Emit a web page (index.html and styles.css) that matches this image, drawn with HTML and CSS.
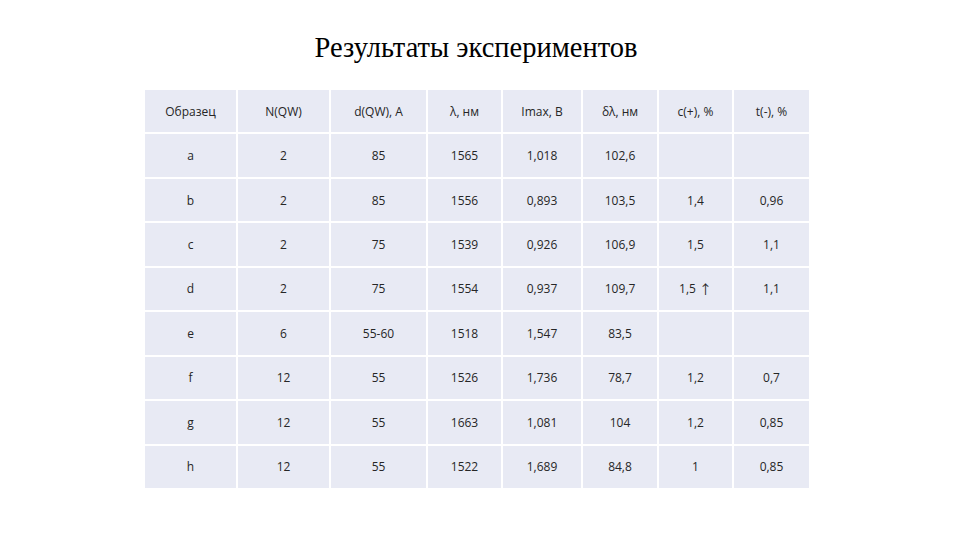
FILE: index.html
```html
<!DOCTYPE html>
<html lang="ru">
<head>
<meta charset="utf-8">
<link rel="stylesheet" href="styles.css">
</head>
<body>
<div class="slide">
  <h1 class="title">Результаты экспериментов</h1>
  <div class="table">
    <div class="cell">Образец</div><div class="cell">N(QW)</div><div class="cell">d(QW), A</div><div class="cell">λ, нм</div><div class="cell">Imax, B</div><div class="cell">δλ, нм</div><div class="cell">c(+), %</div><div class="cell">t(-), %</div>
    <div class="cell">a</div><div class="cell">2</div><div class="cell">85</div><div class="cell">1565</div><div class="cell">1,018</div><div class="cell">102,6</div><div class="cell"></div><div class="cell"></div>
    <div class="cell">b</div><div class="cell">2</div><div class="cell">85</div><div class="cell">1556</div><div class="cell">0,893</div><div class="cell">103,5</div><div class="cell">1,4</div><div class="cell">0,96</div>
    <div class="cell">c</div><div class="cell">2</div><div class="cell">75</div><div class="cell">1539</div><div class="cell">0,926</div><div class="cell">106,9</div><div class="cell">1,5</div><div class="cell">1,1</div>
    <div class="cell">d</div><div class="cell">2</div><div class="cell">75</div><div class="cell">1554</div><div class="cell">0,937</div><div class="cell">109,7</div><div class="cell">1,5 <span class="arrow">↑</span></div><div class="cell">1,1</div>
    <div class="cell">e</div><div class="cell">6</div><div class="cell">55-60</div><div class="cell">1518</div><div class="cell">1,547</div><div class="cell">83,5</div><div class="cell"></div><div class="cell"></div>
    <div class="cell">f</div><div class="cell">12</div><div class="cell">55</div><div class="cell">1526</div><div class="cell">1,736</div><div class="cell">78,7</div><div class="cell">1,2</div><div class="cell">0,7</div>
    <div class="cell">g</div><div class="cell">12</div><div class="cell">55</div><div class="cell">1663</div><div class="cell">1,081</div><div class="cell">104</div><div class="cell">1,2</div><div class="cell">0,85</div>
    <div class="cell">h</div><div class="cell">12</div><div class="cell">55</div><div class="cell">1522</div><div class="cell">1,689</div><div class="cell">84,8</div><div class="cell">1</div><div class="cell">0,85</div>
  </div>
</div>
</body>
</html>
```
FILE: styles.css
```css
html, body {
  margin: 0;
  padding: 0;
  background: #ffffff;
}
.slide {
  width: 960px;
  height: 540px;
  display: flex;
  flex-direction: column;
  align-items: flex-start;
}
.title {
  margin: 31px 0 0 0;
  width: 952px;
  text-align: center;
  font-family: "Liberation Serif", "Times New Roman", serif;
  font-weight: normal;
  font-size: 28.5px;
  line-height: 34px;
  color: #000;
}
.table {
  margin: 25px 0 0 145px;
  display: grid;
  grid-template-columns: 91px 91px 95px 73px 78px 74px 73px 75px;
  grid-template-rows: repeat(9, 1fr);
  gap: 2px;
  height: 398px;
  background: #ffffff;
}
.cell {
  background: #e8eaf4;
  display: flex;
  align-items: center;
  justify-content: center;
  font-family: "Open Sans", "Noto Sans", sans-serif;
  font-size: 12px;
  color: #262626;
}
.arrow {
  font-family: "Noto Sans CJK SC", sans-serif;
  font-size: 13px;
  margin-left: 3px;
}
```
